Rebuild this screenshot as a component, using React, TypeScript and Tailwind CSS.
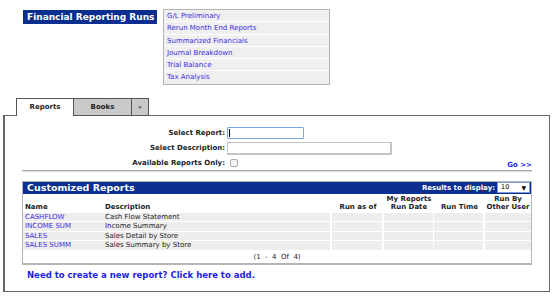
import React from 'react'

const menuItems = [
  'G/L Preliminary',
  'Rerun Month End Reports',
  'Summarized Financials',
  'Journal Breakdown',
  'Trial Balance',
  'Tax Analysis',
]

const reports = [
  { name: 'CASHFLOW', desc: 'Cash Flow Statement' },
  { name: 'INCOME SUM', desc: 'Income Summary' },
  { name: 'SALES', desc: 'Sales Detail by Store' },
  { name: 'SALES SUMM', desc: 'Sales Summary by Store' },
]

const cols = 'grid grid-cols-[80px_229px_52px_50px_51px_1fr]'

export default function App() {
  return (
    <div className="w-[556px] h-[297px] bg-white overflow-hidden font-['DejaVu_Sans',Verdana,sans-serif] text-[#222]">
      {/* top area */}
      <div className="flex items-start pt-[9px] pl-[23px]">
        <div className="mt-[1px] h-[14px] w-[134px] bg-[#0b2f8e] text-white font-bold text-[9px] leading-[14px] pl-[4px] whitespace-nowrap">
          Financial Reporting Runs
        </div>
        <div className="ml-[6px] w-[167px] border border-[#b4b4b4] bg-[#efefef] flex flex-col">
          {menuItems.map((m, i) => (
            <div
              key={m}
              className={
                'h-[12.3px] leading-[13px] pl-[3px] text-[7px] text-[#3a2ce0] ' +
                (i < menuItems.length - 1 ? 'border-b border-white' : '')
              }
            >
              {m}
            </div>
          ))}
        </div>
      </div>

      {/* tabs */}
      <div className="mt-[13px] ml-[16px] flex h-[18px] relative z-10 -mb-px">
        <div className="w-[58px] bg-white border border-b-0 border-[#555] text-[7px] font-bold flex items-center justify-center">
          Reports
        </div>
        <div className="w-[58px] bg-[#c9c9c9] border border-l-0 border-[#555] text-[7px] font-bold flex items-center justify-center">
          Books
        </div>
        <div className="w-[17px] bg-[#c9c9c9] border border-l-0 border-[#555] text-[6px] font-bold flex items-center justify-center">
          »
        </div>
      </div>

      {/* panel */}
      <div className="ml-[3px] w-[547px] h-[177px] border border-[#666] border-l-2 pt-[11px]">
        <div className="flex flex-col gap-[2px] text-[7px]">
          <div className="flex items-center h-[13px]">
            <div className="w-[221px] text-right font-bold pr-[1px]">Select Report:</div>
            <div className="ml-[1px] w-[77px] h-[12px] border border-[#7ba6e4] rounded-[1px] flex items-center pl-[1px]">
              <div className="w-px h-[8px] bg-black" />
            </div>
          </div>
          <div className="flex items-center h-[13px]">
            <div className="w-[221px] text-right font-bold pr-[1px]">Select Description:</div>
            <div className="ml-[1px] w-[165px] h-[13px] border border-[#c4c4c4] border-b-2 border-r-2" />
          </div>
          <div className="flex items-center h-[12px]">
            <div className="w-[221px] text-right font-bold pr-[1px]">Available Reports Only:</div>
            <div className="ml-[4px] w-[8px] h-[8px] border border-[#aaa] rounded-[2px] bg-[#f4f4f4]" />
            <div className="ml-auto mr-[17px] mt-[4px] text-[#2222ee] font-bold">Go &gt;&gt;</div>
          </div>
        </div>

        <div className="mx-[17px] mt-[1px] h-[2px] bg-[#aaa] border-b border-[#ddd]" />

        {/* customized reports */}
        <div className="mx-[17px] mt-[9px] w-[510px] border border-[#b5b5b5] border-b-2">
          <div className="h-[12px] bg-[#0b2f8e] flex items-center justify-between pl-[4px] pr-[1px]">
            <span className="text-white font-bold text-[9.5px] leading-[12px]">Customized Reports</span>
            <div className="flex items-center gap-[2px]">
              <span className="text-white font-bold text-[7px]">Results to display:</span>
              <div className="w-[33px] h-[11px] bg-white border border-[#7b9bd8] flex items-center justify-between px-[3px] text-[6.5px] text-black">
                <span>10</span>
                <span className="text-[6px]">▼</span>
              </div>
            </div>
          </div>

          <div className={cols + ' h-[19px] text-[7px] font-bold leading-[8.5px] items-end pb-[1px]'}>
            <div className="pl-[2px]">Name</div>
            <div className="pl-[2px]">Description</div>
            <div className="text-center">Run as of</div>
            <div className="text-center">My Reports<br />Run Date</div>
            <div className="text-center">Run Time</div>
            <div className="text-center">Run By<br />Other User</div>
          </div>

          {reports.map((r) => (
            <div key={r.name} className={cols + ' h-[9.5px] text-[7px] leading-[8.5px] border-b border-white'}>
              <div className="bg-[#ededed] pl-[2px] text-[#3a2ce0]">{r.name}</div>
              <div className="bg-[#ededed] pl-[2px] border-r-2 border-white">{r.desc}</div>
              <div className="bg-[#ededed] border-r-2 border-white" />
              <div className="bg-[#ededed] border-r border-white" />
              <div className="bg-[#ededed] border-r-2 border-white" />
              <div className="bg-[#ededed]" />
            </div>
          ))}

          <div className="h-[12px] text-[7px] leading-[12px] text-center whitespace-pre">(1  -  4  Of  4)</div>
        </div>

        <div className="ml-[22px] mt-[4px] text-[8.5px] font-bold text-[#1d1de6]">
          Need to create a new report? Click here to add.
        </div>
      </div>
    </div>
  )
}
